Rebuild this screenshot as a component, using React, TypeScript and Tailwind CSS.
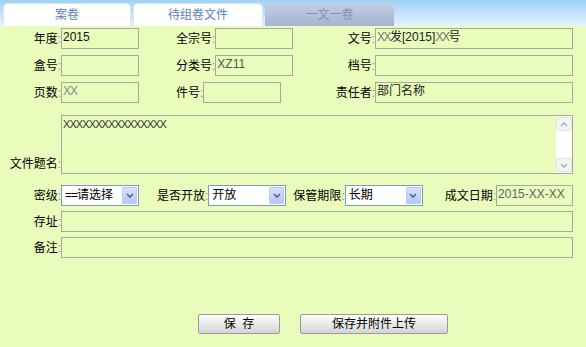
import React from "react";

const FONT = { fontFamily: '"Liberation Sans", "Noto Sans CJK SC", sans-serif' };

function Label({ text, w, align = "right" }: { text: string; w?: string; align?: "right" | "left" }) {
  return (
    <div
      className={`flex h-full shrink-0 items-center whitespace-nowrap text-[12px] leading-[14px] text-black ${
        align === "right" ? "justify-end" : "justify-start"
      } ${w ?? ""}`}
    >
      <span>{text}</span>
      <span className="text-[#8a8a8a]">:</span>
    </div>
  );
}

function Field({ w, children }: { w: string; children?: React.ReactNode }) {
  return (
    <div
      className={`h-full min-w-0 border border-[#a3ab9f] px-[1px] pt-[1px] text-[12px] leading-[14px] whitespace-nowrap overflow-hidden ${w}`}
    >
      {children}
    </div>
  );
}

function Chevron({ up }: { up?: boolean }) {
  return (
    <svg width="8" height="5" viewBox="0 0 8 5">
      <path
        d={up ? "M1 4 L4 1 L7 4" : "M1 1 L4 4 L7 1"}
        fill="none"
        stroke="currentColor"
        strokeWidth="1.6"
      />
    </svg>
  );
}

function Select({ text }: { text: React.ReactNode }) {
  return (
    <div className="flex h-full w-[78px] shrink-0 items-stretch border border-[#7f9db9] bg-white">
      <div className="min-w-0 flex-1 overflow-hidden whitespace-nowrap pl-[3px] pt-[2px] text-[12px] leading-[14px] text-black">
        {text}
      </div>
      <div className="my-[1px] mr-[1px] flex w-[15px] items-center justify-center rounded-[1px] border border-[#b9cbf3] bg-gradient-to-b from-[#d6e2fc] to-[#b4c8f6] text-[#4d6185]">
        <Chevron />
      </div>
    </div>
  );
}

export default function App() {
  return (
    <div className="h-[347px] w-[586px] overflow-hidden bg-[#e9fcbb]" style={FONT}>
      {/* Tab bar */}
      <div className="flex h-[26px] items-end bg-gradient-to-b from-[#9ed2f6] to-[#e4f4fd] pl-[3px]">
        <div className="flex h-[23px] w-[128px] items-center justify-center rounded-t-[5px] border border-b-0 border-[#dde6ee] bg-white text-[12px] text-[#5b80b8]">
          案卷
        </div>
        <div className="ml-[2px] flex h-[23px] w-[130px] items-center justify-center rounded-t-[5px] border border-b-0 border-[#dde6ee] bg-white text-[12px] text-[#5b80b8]">
          待组卷文件
        </div>
        <div className="ml-[2px] flex h-[23px] w-[129px] items-center justify-center rounded-t-[5px] bg-gradient-to-b from-[#c3cfe3] to-[#a4b5d0] text-[12px] text-[#7f91b3]">
          一文一卷
        </div>
      </div>

      {/* Form */}
      <div className="pr-[13px]">
        <div className="flex w-full flex-col pt-[2px]">
          {/* Row 1 */}
          <div className="flex h-[21px]">
            <div className="flex h-full w-[176px] shrink-0">
              <Label text="年度" w="w-[61px]" />
              <Field w="w-[78px]">
                <span className="text-[#111]">2015</span>
              </Field>
            </div>
            <div className="flex h-full w-[150px] shrink-0">
              <Label text="全宗号" align="left" />
              <Field w="w-[78px]" />
            </div>
            <div className="flex h-full min-w-0 flex-1 justify-end">
              <Label text="文号" />
              <Field w="w-[198px]">
                <span className="tracking-[-1.5px] text-[#777]">XX</span>
                <span className="text-[#222]">发[2015]</span>
                <span className="tracking-[-1.5px] text-[#777]">XX</span>
                <span className="text-[#222]">号</span>
              </Field>
            </div>
          </div>

          {/* Row 2 */}
          <div className="mt-[6px] flex h-[21px]">
            <div className="flex h-full w-[176px] shrink-0">
              <Label text="盒号" w="w-[61px]" />
              <Field w="w-[78px]" />
            </div>
            <div className="flex h-full w-[150px] shrink-0">
              <Label text="分类号" align="left" />
              <Field w="w-[78px]">
                <span className="text-[#555]">XZ11</span>
              </Field>
            </div>
            <div className="flex h-full min-w-0 flex-1 justify-end">
              <Label text="档号" />
              <Field w="w-[198px]" />
            </div>
          </div>

          {/* Row 3 */}
          <div className="mt-[6px] flex h-[21px]">
            <div className="flex h-full w-[176px] shrink-0">
              <Label text="页数" w="w-[61px]" />
              <Field w="w-[78px]">
                <span className="tracking-[-1px] text-[#888]">XX</span>
              </Field>
            </div>
            <div className="flex h-full w-[150px] shrink-0">
              <Label text="件号" align="left" />
              <Field w="w-[78px]" />
            </div>
            <div className="flex h-full min-w-0 flex-1 justify-end">
              <Label text="责任者" />
              <Field w="w-[198px]">
                <span className="text-[#222]">部门名称</span>
              </Field>
            </div>
          </div>

          {/* Textarea row */}
          <div className="mt-[12px] flex h-[59px]">
            <div className="flex h-full w-[61px] shrink-0 items-end justify-end pb-[3px] text-[12px] leading-[14px] whitespace-nowrap">
              <span>文件题名</span>
              <span className="text-[#8a8a8a]">:</span>
            </div>
            <div className="flex h-full min-w-0 flex-1 border border-[#a3ab9f]">
              <div className="min-w-0 flex-1 pl-[1px] pt-[2px] text-[11px] leading-[13px] tracking-[-0.9px] text-[#333]">
                XXXXXXXXXXXXXXXX
              </div>
              <div className="flex w-[16px] flex-col justify-between bg-white py-[1px]">
                <div className="flex h-[14px] items-center justify-center rounded-[2px] border border-[#e2e2e2] bg-[#f4f4f4] text-[#b0b0b0]">
                  <Chevron up />
                </div>
                <div className="flex h-[14px] items-center justify-center rounded-[2px] border border-[#e2e2e2] bg-[#f4f4f4] text-[#b0b0b0]">
                  <Chevron />
                </div>
              </div>
            </div>
          </div>

          {/* Select row */}
          <div className="mt-[11px] flex h-[21px]">
            <Label text="密级" w="w-[61px]" />
            <Select
              text={
                <>
                  <span className="tracking-[-1px]">==</span>请选择
                </>
              }
            />
            <div className="ml-[18px] h-full shrink-0">
              <Label text="是否开放" />
            </div>
            <Select text="开放" />
            <div className="ml-[7px] h-full shrink-0">
              <Label text="保管期限" />
            </div>
            <Select text="长期" />
            <div className="ml-[22px] h-full shrink-0">
              <Label text="成文日期" />
            </div>
            <Field w="flex-1">
              <span className="text-[#666]">2015-XX-XX</span>
            </Field>
          </div>

          {/* 存址 */}
          <div className="mt-[5px] flex h-[21px]">
            <Label text="存址" w="w-[61px]" />
            <Field w="flex-1" />
          </div>

          {/* 备注 */}
          <div className="mt-[5px] flex h-[21px]">
            <Label text="备注" w="w-[61px]" />
            <Field w="flex-1" />
          </div>

          {/* Buttons */}
          <div className="mt-[56px] flex h-[20px] pl-[198px]">
            <button className="flex h-full w-[82px] items-center justify-center rounded-[2px] border border-[#9a9a9a] bg-gradient-to-b from-white to-[#d4d4d4] text-[12px] leading-[14px] text-black">
              保&nbsp;&nbsp;存
            </button>
            <button className="ml-[20px] flex h-full w-[148px] items-center justify-center rounded-[2px] border border-[#9a9a9a] bg-gradient-to-b from-white to-[#d4d4d4] text-[12px] leading-[14px] text-black">
              保存并附件上传
            </button>
          </div>
        </div>
      </div>
    </div>
  );
}
